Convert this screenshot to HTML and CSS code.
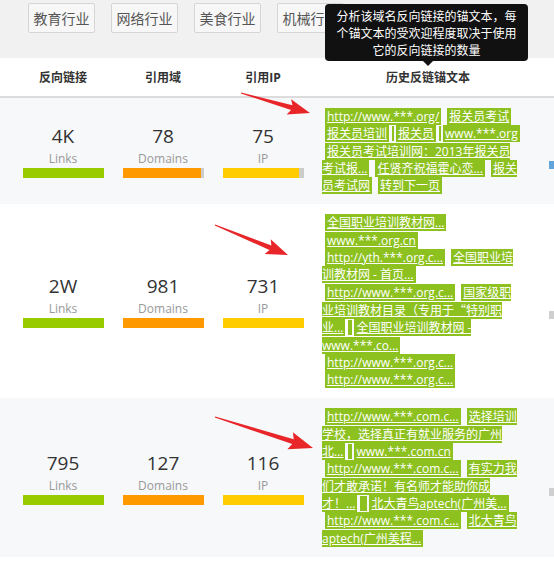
FILE: index.html
```
<!DOCTYPE html>
<html lang="zh-CN">
<head>
<meta charset="utf-8">
<title>历史反链锚文本</title>
<link rel="stylesheet" href="styles.css">
</head>
<body>
<div class="page">
  <div class="filters">
    <span class="btn">教育行业</span>
    <span class="btn">网络行业</span>
    <span class="btn">美食行业</span>
    <span class="btn">机械行业</span>
  </div>
  <div class="tip">分析该域名反向链接的锚文本，每<br>个锚文本的受欢迎程度取决于使用<br>它的反向链接的数量</div>

  <div class="row head">
    <div class="c">反向链接</div>
    <div class="c">引用域</div>
    <div class="c">引用IP</div>
    <div class="c">历史反链锚文本</div>
    <div></div>
  </div>

  <div class="row data odd">
    <div class="stat"><div class="num">4K</div><div class="lbl">Links</div><div class="bar"><span class="fill g" style="width:100%"></span></div></div>
    <div class="stat"><div class="num">78</div><div class="lbl">Domains</div><div class="bar"><span class="fill o" style="width:97.5%"></span></div></div>
    <div class="stat"><div class="num">75</div><div class="lbl">IP</div><div class="bar"><span class="fill y" style="width:94%"></span></div></div>
    <div class="anchors"><span class="a">http://www.***.org/</span><span class="a">报关员考试</span><br><span class="a">报关员培训</span><span class="sep"></span><span class="a">报关员</span><span class="sep"></span><span class="a">www.***.org</span><br><span class="a">报关员考试培训网：2013年报关员<br>考试报...</span><span class="a">任贤齐祝福霍心恋...</span><span class="a">报关<br>员考试网</span><span class="a">转到下一页</span></div>
    <div class="extra"><span class="sq blue"></span></div>
  </div>

  <div class="row data">
    <div class="stat"><div class="num">2W</div><div class="lbl">Links</div><div class="bar"><span class="fill g" style="width:100%"></span></div></div>
    <div class="stat"><div class="num">981</div><div class="lbl">Domains</div><div class="bar"><span class="fill o" style="width:100%"></span></div></div>
    <div class="stat"><div class="num">731</div><div class="lbl">IP</div><div class="bar"><span class="fill y" style="width:100%"></span></div></div>
    <div class="anchors"><span class="a">全国职业培训教材网...</span><br><span class="a">www.***.org.cn</span><br><span class="a">http://yth.***.org.c...</span><span class="a">全国职业培<br>训教材网 - 首页...</span><br><span class="a">http://www.***.org.c...</span><span class="a">国家级职<br>业培训教材目录（专用于<span class="fw">“</span>特别职<br>业...</span><span class="sep wide"></span><span class="a">全国职业培训教材网 -<br>www.***.co...</span><br><span class="a">http://www.***.org.c...</span><br><span class="a">http://www.***.org.c...</span></div>
    <div class="extra"><span class="sq grey"></span></div>
  </div>

  <div class="row data odd">
    <div class="stat"><div class="num">795</div><div class="lbl">Links</div><div class="bar"><span class="fill g" style="width:100%"></span></div></div>
    <div class="stat"><div class="num">127</div><div class="lbl">Domains</div><div class="bar"><span class="fill o" style="width:100%"></span></div></div>
    <div class="stat"><div class="num">116</div><div class="lbl">IP</div><div class="bar"><span class="fill y" style="width:100%"></span></div></div>
    <div class="anchors"><span class="a">http://www.***.com.c...</span><span class="a">选择培训<br>学校，选择真正有就业服务的广州<br>北...</span><span class="sep wide"></span><span class="a">www.***.com.cn</span><br><span class="a">http://www.***.com.c...</span><span class="a">有实力我<br>们才敢承诺！有名师才能助你成<br>才！...</span><span class="sep wider"></span><span class="sep"></span><span class="a">北大青鸟aptech(广州美...</span><br><span class="a">http://www.***.com.c...</span><span class="a">北大青鸟<br>aptech(广州美程...</span></div>
    <div class="extra"><span class="sq grey"></span></div>
  </div>

  <svg class="arrows" width="554" height="561" viewBox="0 0 554 561">
    <polygon points="241.14,92.52 292.45,105.31 291.10,99.20 310,113 286.64,114.56 291.05,110.11 240.86,93.48"/>
    <polygon points="215.19,224.54 271.38,245.47 270.69,239.24 288,255 264.61,254.04 269.48,250.09 214.81,225.46"/>
    <polygon points="215.18,416.43 293.74,439.28 292.84,432.18 313,448 287.42,449.34 292.24,444.04 214.82,417.57"/>
  </svg>
</div>
</body>
</html>
```
FILE: styles.css
```
html, body {
  margin: 0;
  padding: 0;
  background: #fff;
  overflow: hidden;
}
body {
  font-family: "Open Sans", "Noto Sans CJK SC", sans-serif;
  color: #333;
}
.page {
  position: relative;
  width: 554px;
  height: 561px;
  overflow: hidden;
}
.filters {
  height: 58px;
  box-sizing: border-box;
  padding: 3px 0 0 28px;
  background: #f1f1f1;
  display: flex;
  align-items: flex-start;
  gap: 16px;
}
.btn {
  width: 67px;
  height: 30px;
  box-sizing: border-box;
  border: 1px solid #d5d5d5;
  border-radius: 2px;
  background: #f7f7f7;
  color: #555;
  font-family: "Noto Sans CJK SC", sans-serif;
  font-size: 14px;
  line-height: 28px;
  text-align: center;
}
.tip {
  position: absolute;
  left: 325px;
  top: 4px;
  width: 203px;
  box-sizing: border-box;
  padding: 3px 0;
  background: #111;
  color: #fff;
  border-radius: 4px;
  font-family: "Noto Sans CJK SC", sans-serif;
  font-size: 12px;
  line-height: 17px;
  text-align: center;
  z-index: 2;
}
.tip::after {
  content: "";
  position: absolute;
  left: 98px;
  bottom: -5px;
  border-left: 5px solid transparent;
  border-right: 5px solid transparent;
  border-top: 5px solid #111;
}
.row {
  display: grid;
  grid-template-columns: 100px 100px 100px 230px 1fr;
  padding-left: 13px;
  align-items: center;
}
.head {
  height: 38px;
  border-bottom: 2px solid #dcdcdc;
  font-size: 12px;
  font-weight: bold;
  color: #333;
}
.head .c {
  text-align: center;
}
.data {
  padding-top: 10px;
  padding-bottom: 10px;
}
.odd {
  background: #f7f8fa;
}
.stat {
  text-align: center;
}
.num {
  font-size: 19px;
  line-height: 24px;
  color: #333;
}
.lbl {
  margin-top: 3px;
  font-size: 12px;
  line-height: 16px;
  color: #999;
}
.bar {
  display: flex;
  width: 81px;
  height: 10px;
  margin: 1px auto 0;
  background: #cccccc;
}
.fill {
  height: 100%;
}
.g { background: #99cc00; }
.o { background: #ff9900; }
.y { background: #ffcc00; }
.anchors {
  padding-left: 9px;
  font-size: 12px;
  line-height: 17.3px;
  white-space: nowrap;
}
.a {
  margin: 0 3px;
  padding: 0 2px;
  background: #8cc11f;
  color: #fff;
  text-decoration: underline;
}
.fw {
  font-family: "Noto Sans CJK SC", sans-serif;
  font-feature-settings: "fwid";
}
.sep {
  display: inline-block;
  width: 2px;
  height: 15px;
  margin: 0 -0.5px;
  vertical-align: -3px;
  background: #8cc11f;
}
.sep.wide {
  width: 4px;
}
.sep.wider {
  width: 6px;
}
.extra .sq {
  display: block;
  width: 8px;
  height: 8px;
  margin: 28px 0 0 6px;
}
.blue { background: #62a5dc; }
.grey { background: #cfcfcf; }
.arrows {
  position: absolute;
  left: 0;
  top: 0;
  pointer-events: none;
  z-index: 3;
}
.arrows polygon {
  fill: #e8262a;
}
```
